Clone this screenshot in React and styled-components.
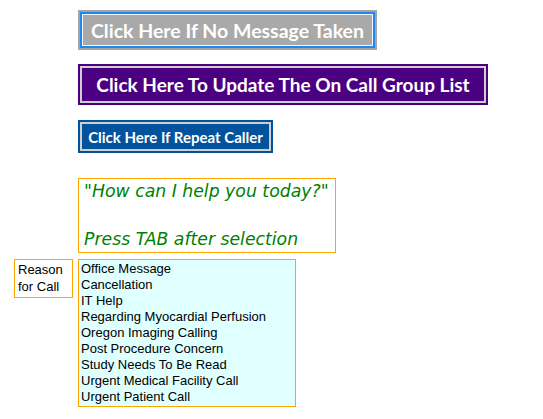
import React from "react"
import styled, { createGlobalStyle } from "styled-components"

const GlobalStyle = createGlobalStyle`
    html, body {
        margin: 0;
        padding: 0;
        background: #ffffff;
    }
`

const Page = styled.div`
    display: grid;
    grid-template-columns: 59px auto;
    column-gap: 5px;
    padding: 10px 0 0 14px;
    align-items: start;
`

const Stack = styled.div`
    grid-column: 2;
    display: flex;
    flex-direction: column;
    align-items: flex-start;
`

const Frame = styled.div`
    background-color: ${props => props.color};
    padding: 2px;
    margin-bottom: ${props => props.gap}px;
`

const ActionButton = styled.button`
    display: block;
    box-sizing: border-box;
    height: ${props => props.h}px;
    width: ${props => props.w}px;
    padding: 0;
    background-color: ${props => props.color};
    border: 2px solid ${props => props.focused ? "#1e88f0" : "#cfcfcf"};
    box-shadow: ${props => props.focused ? "inset 0 0 0 1px #f4f8fc" : "none"};
    color: #ffffff;
    font-family: Lato, "Open Sans", sans-serif;
    font-weight: 700;
    font-size: ${props => props.size}px;
    text-align: center;
    cursor: pointer;
`

const Prompt = styled.div`
    box-sizing: border-box;
    width: 258px;
    height: 75px;
    border: 1px solid #ffa500;
    padding: 0 5px;
    margin-top: 10px;
    margin-bottom: 6px;
    font-family: "DejaVu Sans", Verdana, sans-serif;
    font-style: italic;
    font-size: 17.3px;
    line-height: 24px;
    color: #008000;
`

const Label = styled.div`
    grid-column: 1;
    box-sizing: border-box;
    width: 59px;
    height: 39px;
    border: 1px solid #ffa500;
    padding: 1px 3px;
    font-family: "Liberation Sans", Arial, sans-serif;
    font-size: 13px;
    line-height: 17px;
    color: #000;
`

const ReasonList = styled.ul`
    grid-column: 2;
    list-style: none;
    margin: 0;
    box-sizing: border-box;
    width: 218px;
    border: 1px solid #ffa500;
    background-color: #e0ffff;
    padding: 1px 2px;
    font-family: "Liberation Sans", Arial, sans-serif;
    font-size: 13px;
    line-height: 16px;
    color: #000;
`

const reasons = [
    "Office Message",
    "Cancellation",
    "IT Help",
    "Regarding Myocardial Perfusion",
    "Oregon Imaging Calling",
    "Post Procedure Concern",
    "Study Needs To Be Read",
    "Urgent Medical Facility Call",
    "Urgent Patient Call",
]

const App = () => {
    return (
        <>
            <GlobalStyle />
            <Page>
                <Stack>
                    <Frame color="#a4a4a4" gap={14}>
                        <ActionButton color="#a9a9a9" focused h={36} w={295} size={19.5}>
                            Click Here If No Message Taken
                        </ActionButton>
                    </Frame>
                    <Frame color="#4b0082" gap={15}>
                        <ActionButton color="#4b0082" h={37} w={406} size={19}>
                            Click Here To Update The On Call Group List
                        </ActionButton>
                    </Frame>
                    <Frame color="#01539d" gap={15}>
                        <ActionButton color="#01539d" h={29} w={191} size={15}>
                            Click Here If Repeat Caller
                        </ActionButton>
                    </Frame>
                    <Prompt>
                        "How can I help you today?"
                        <br />
                        <br />
                        Press TAB after selection
                    </Prompt>
                </Stack>
                <Label>Reason for Call</Label>
                <ReasonList>
                    {reasons.map(r => <li key={r}>{r}</li>)}
                </ReasonList>
            </Page>
        </>
    )
}

export default App
